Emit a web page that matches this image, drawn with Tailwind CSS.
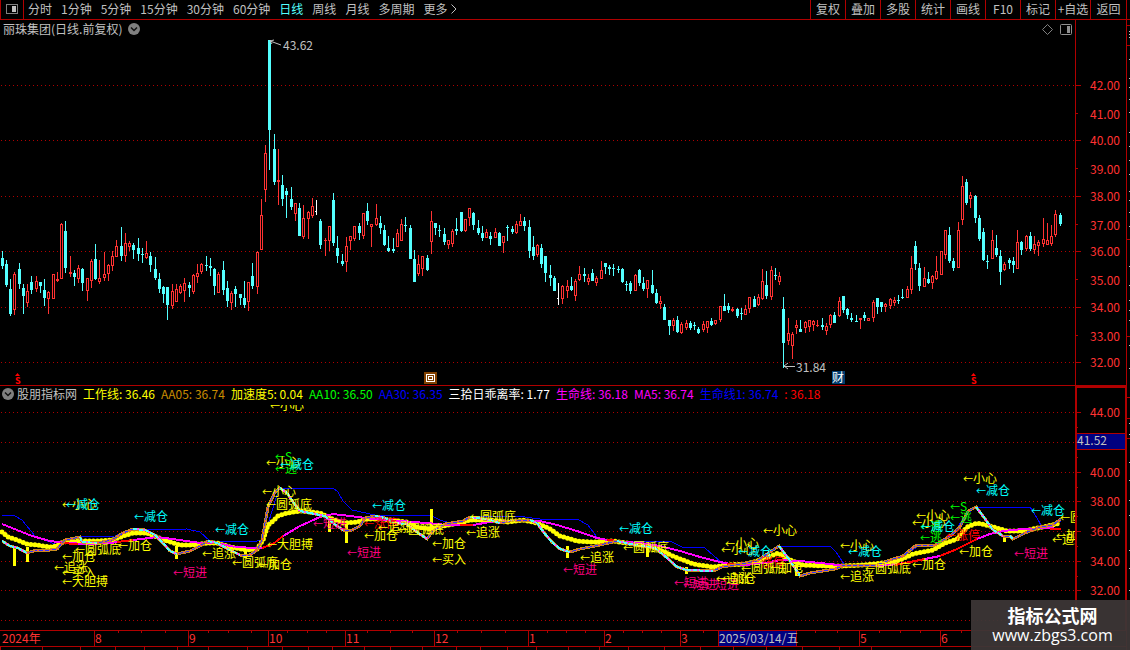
<!DOCTYPE html>
<html lang="zh-CN">
<head>
    <meta charset="UTF-8">
    <meta name="viewport" content="width=device-width, initial-scale=1.0">
    <title>丽珠集团 - 日线</title>
    <script src="https://cdn.jsdelivr.net/npm/@tailwindcss/browser@4"></script>
</head>
<body class="relative flex flex-col min-h-screen bg-black overflow-hidden text-[#c0c0c0] text-xs font-['Noto_Sans_CJK_SC',sans-serif]">

    <!-- Toolbar -->
    <header class="flex justify-between h-5 border-b border-[#b00000] pr-[3px]">
        <nav class="flex items-center gap-[9px] whitespace-nowrap leading-4 pb-[2px]">
            <button type="button" aria-label="面板" class="flex items-center justify-center w-6 h-5 -mr-[5px] border-x border-[#b00000]">
                <svg width="12" height="10" viewBox="0 0 12 10" shape-rendering="crispEdges">
                    <rect x="0.5" y="0.5" width="11" height="9" fill="none" stroke="#808080"/>
                    <rect x="6" y="2" width="4" height="6" fill="#c0c0c0"/>
                </svg>
            </button>
            <button type="button">分时</button>
            <button type="button">1分钟</button>
            <button type="button">5分钟</button>
            <button type="button">15分钟</button>
            <button type="button">30分钟</button>
            <button type="button">60分钟</button>
            <button type="button" class="text-[#54ffff]">日线</button>
            <button type="button">周线</button>
            <button type="button">月线</button>
            <button type="button">多周期</button>
            <button type="button" class="flex items-center gap-1">更多
                <svg width="6" height="10" viewBox="0 0 6 10" fill="none" stroke="#c0c0c0"><path d="M0.5 0.5 L5 5 L0.5 9.5"/></svg>
            </button>
        </nav>
        <nav class="flex whitespace-nowrap leading-4 border-r border-[#b00000]">
            <button type="button" class="w-[35px] pb-[2px] border-l border-[#b00000]">复权</button>
            <button type="button" class="w-[35px] pb-[2px] border-l border-[#b00000]">叠加</button>
            <button type="button" class="w-[35px] pb-[2px] border-l border-[#b00000]">多股</button>
            <button type="button" class="w-[35px] pb-[2px] border-l border-[#b00000]">统计</button>
            <button type="button" class="w-[35px] pb-[2px] border-l border-[#b00000]">画线</button>
            <button type="button" class="w-[35px] pb-[2px] border-l border-[#b00000]">F10</button>
            <button type="button" class="w-[35px] pb-[2px] border-l border-[#b00000]">标记</button>
            <button type="button" class="w-[35px] pb-[2px] border-l border-[#b00000]">+自选</button>
            <button type="button" class="w-[36px] pb-[2px] border-l border-[#b00000]">返回</button>
        </nav>
    </header>

    <div class="flex flex-1">
        <main class="flex-1 min-w-0">
            <!-- K line -->
            <section class="relative border-b border-[#b00000]">
                <svg id="kline" class="block w-full h-auto" viewBox="0 20 1126 365"></svg>
                <div class="absolute inset-x-0 top-0 flex items-center justify-between h-[18px] pl-[3px] pr-[54px]">
                    <h1 class="flex items-center gap-[6px]">丽珠集团(日线.前复权)
                        <svg width="12" height="12" viewBox="0 0 12 12"><circle cx="6" cy="6" r="6" fill="#808080"/><path d="M3 4.5 L6 7.5 L9 4.5" fill="none" stroke="#111" stroke-width="1.5"/></svg>
                    </h1>
                    <div class="flex items-center gap-[7px]">
                        <svg width="11" height="11" viewBox="0 0 11 11" fill="none" stroke="#808080"><path d="M5.5 0.5 L10.5 5.5 L5.5 10.5 L0.5 5.5 Z"/></svg>
                        <svg width="12" height="11" viewBox="0 0 12 11"><rect x="0.5" y="0.5" width="11" height="10" rx="1" fill="none" stroke="#909090"/><rect x="7" y="2" width="3" height="7" fill="#909090"/></svg>
                    </div>
                </div>
            </section>

            <!-- Indicator -->
            <section class="relative">
                <svg id="indicator" class="block w-full h-auto" viewBox="0 386 1126 244"></svg>
                <div class="absolute left-[2px] top-0 flex items-center gap-[6px] h-4 whitespace-nowrap">
                    <h2 class="flex items-center gap-[3px]">
                        <svg width="12" height="12" viewBox="0 0 12 12"><circle cx="6" cy="6" r="6" fill="#808080"/><path d="M3 4.5 L6 7.5 L9 4.5" fill="none" stroke="#111" stroke-width="1.5"/></svg>
                        股朋指标网
                    </h2>
                    <span class="text-[#ffff00]">工作线: 36.46</span>
                    <span class="text-[#c88c00]">AA05: 36.74</span>
                    <span class="text-[#ffff00]">加速度5: 0.04</span>
                    <span class="text-[#00ff00]">AA10: 36.50</span>
                    <span class="text-[#0000ff]">AA30: 36.35</span>
                    <span class="text-white">三拾日乖离率: 1.77</span>
                    <span class="text-[#ff00ff]">生命线: 36.18</span>
                    <span class="text-[#ff00ff]">MA5: 36.74</span>
                    <span class="text-[#0000ff]">生命线1: 36.74</span>
                    <span class="text-[#ff0000]">: 36.18</span>
                </div>
            </section>

            <!-- Dates -->
            <svg id="dates" class="block w-full h-auto" viewBox="0 630 1126 20"></svg>
        </main>

        <!-- Edge of the side panel -->
        <aside class="w-1 border-l border-[#b00000]">
            <svg id="edge" class="block" width="3" height="630" viewBox="0 0 3 630" shape-rendering="crispEdges"></svg>
        </aside>
    </div>

    <!-- Watermark -->
    <footer class="absolute right-0 bottom-0 flex flex-col items-center w-[159px] h-[50px] pt-[3px] pl-1 bg-[#3c3636]/95 text-white">
        <strong class="text-lg leading-6">指标公式网</strong>
        <a href="#" class="text-base leading-4 font-['Open_Sans',sans-serif]">www.zbgs3.com</a>
    </footer>

    <script>
        const LINE = '#b00000', RED = '#ff3232', CYAN = '#54ffff', GRAY = '#c0c0c0';

        const rect = (x, y, w, h, fill) => `<rect x="${x}" y="${y}" width="${w}" height="${h}" fill="${fill}"/>`;
        const text = (x, cy, s, fill) => `<text x="${x}" y="${cy + 4}" fill="${fill}" font-size="12">${s}</text>`;
        const grid = (y) => `<path d="M1 ${y + 0.5} H1075" stroke="${LINE}" stroke-dasharray="1 3"/>`;
        const crisp = (s) => `<g shape-rendering="crispEdges">${s}</g>`;

        // x, high, body top, body bottom, low, colour
        const candles = `2,251,258,266,269,c 6,260,264,285,287,c 10,279,289,314,316,c 14,272,274,310,315,r 19,263,269,284,289,c
            23,284,288,296,314,c 27,284,291,303,307,r 31,276,282,290,294,c 36,276,281,289,292,r 40,282,282,286,293,c
            44,279,290,298,306,c 48,291,292,299,314,r 53,274,274,299,299,r 57,272,279,281,282,r 61,223,224,279,279,r
            65,221,231,268,273,c 70,256,272,274,277,r 74,270,273,277,286,c 78,265,268,279,283,r 82,268,269,283,291,c
            87,278,278,291,301,r 91,259,261,281,288,r 95,244,259,279,280,c 99,260,278,282,284,r 104,252,274,278,281,r
            108,264,265,274,281,r 112,251,256,266,271,r 116,240,246,257,257,r 121,227,246,256,261,c 125,233,243,256,262,r
            129,241,243,247,251,r 133,243,245,250,259,c 138,238,248,254,261,c 142,248,254,255,263,c 146,241,253,258,259,r
            150,252,256,265,272,c 155,257,269,278,280,c 159,273,279,289,293,c 163,286,287,294,303,c 167,287,287,305,320,c
            172,284,291,306,309,r 176,284,289,302,302,r 180,284,286,293,294,r 184,278,283,291,302,r 189,282,285,288,297,c
            193,274,275,292,294,r 197,264,273,277,283,r 201,263,264,272,274,r 206,256,265,266,271,c 210,258,266,268,276,c
            214,268,269,286,295,c 218,272,274,293,293,r 223,261,270,290,295,c 227,281,288,301,307,c 231,291,293,303,310,r
            235,286,289,294,307,c 240,294,294,298,305,c 244,281,298,305,308,c 248,282,282,302,311,r 252,263,276,286,289,c
            257,251,252,287,294,r 261,199,215,250,250,r 265,145,153,190,202,r 269,40,40,130,170,c 274,134,149,182,185,c
            278,149,180,182,205,r 282,175,185,199,206,c 286,188,191,195,218,c 291,187,199,207,210,c 295,203,203,214,221,r
            299,203,208,236,236,c 303,205,218,237,239,r 308,211,212,219,239,r 312,198,206,216,218,r 316,200,211,212,215,w
            320,219,221,245,249,c 325,238,240,241,256,r 329,226,226,241,251,r 333,193,200,243,246,c 337,236,248,256,263,c
            342,254,261,264,266,c 346,237,246,262,272,r 350,236,236,241,250,r 354,226,226,239,241,r 359,223,226,233,240,c
            363,213,213,236,239,r 367,203,211,221,225,c 371,224,224,227,247,r 376,204,218,225,226,r 380,216,223,228,234,c
            384,225,230,245,246,c 388,236,248,251,252,c 393,238,249,251,253,c 397,229,233,247,247,r 401,219,224,241,241,r
            405,217,225,226,232,c 410,225,228,259,259,c 414,250,259,282,282,c 418,255,264,274,276,r 422,256,256,269,276,r
            427,255,258,270,271,c 431,211,221,242,254,r 435,223,223,228,235,c 439,225,230,231,237,c 444,228,234,242,245,c
            448,240,240,245,249,r 452,229,231,244,247,r 456,218,229,231,235,c 461,212,212,231,232,c 465,219,219,231,232,r
            469,208,208,218,226,r 473,212,213,225,230,c 478,220,228,233,235,c 482,226,233,238,241,c 486,229,232,238,238,r
            490,232,236,239,245,c 495,228,232,238,238,r 499,232,233,246,246,c 503,236,236,243,253,r 507,225,227,228,241,c
            512,226,229,232,234,c 516,221,224,233,234,r 520,214,221,226,226,r 524,217,221,226,231,c 529,220,227,251,258,c
            533,236,247,256,260,c 537,244,245,255,257,r 541,244,248,264,268,c 545,256,256,273,282,c 550,265,275,278,286,c
            554,276,278,291,291,c 558,283,298,299,305,w 562,285,286,299,304,r 567,280,286,291,298,r 571,277,286,290,291,c
            575,279,281,296,301,r 579,266,274,280,281,r 584,268,274,276,282,c 588,274,278,282,285,r 592,269,273,281,281,c
            596,276,278,283,286,r 601,261,270,279,279,r 605,263,263,267,274,c 609,265,267,269,275,c 613,264,268,269,276,c
            618,266,269,270,273,c 622,268,269,282,283,c 626,281,284,285,291,c 630,281,283,291,294,c 635,274,275,291,291,r
            639,269,270,283,286,c 643,277,283,289,291,c 647,280,280,289,298,r 652,270,285,293,294,c 656,289,293,303,304,c
            660,296,301,304,309,r 664,304,307,320,320,c 669,320,320,326,335,c 673,318,320,326,331,r 677,316,320,332,333,c
            681,322,324,333,334,r 686,320,323,328,330,r 690,321,323,328,330,c 694,322,325,326,330,c 698,327,329,333,334,c
            703,321,324,330,332,r 707,321,321,328,333,r 711,318,321,325,326,c 715,320,320,324,325,r 720,306,306,320,322,r
            724,294,306,311,311,c 728,303,306,310,313,c 732,307,309,311,312,r 737,308,309,316,318,c 741,308,313,314,320,c
            745,305,309,315,315,r 749,297,297,309,313,r 754,296,299,307,307,c 758,294,297,305,306,r 762,269,281,299,300,r
            766,271,285,296,299,c 771,266,270,297,300,r 775,268,275,276,280,c 779,272,276,282,285,r 783,297,309,343,368,c
            788,318,333,341,345,r 792,332,334,346,359,r 796,320,325,328,334,r 800,320,329,332,332,c 805,321,322,328,333,r
            809,320,320,327,332,r 813,320,321,325,331,r 817,320,325,326,327,r 822,318,325,327,330,c 826,323,326,331,335,r
            830,314,315,325,328,r 834,312,315,323,323,c 839,297,301,316,317,r 843,296,296,310,313,c 847,308,309,315,319,c
            851,313,318,320,322,c 856,315,321,322,322,c 860,318,318,320,329,r 864,312,315,318,321,c 868,318,318,321,321,r
            873,300,302,318,322,r 877,298,298,307,314,c 881,302,302,307,312,c 885,303,304,307,312,r 890,298,299,306,309,r
            894,297,300,303,306,r 898,295,300,301,304,c 902,289,297,298,299,c 907,286,289,298,298,r 911,256,268,290,294,r
            915,241,246,264,270,c 919,263,268,286,291,c 924,267,278,287,287,r 928,272,279,283,284,c 932,275,276,283,289,r
            936,256,271,279,280,r 941,251,251,275,275,r 945,230,230,255,259,r 949,227,235,261,263,c 953,258,261,268,271,c
            958,222,230,268,268,r 962,176,186,220,225,r 966,179,182,203,205,c 970,192,195,199,208,r 975,195,196,218,223,c
            979,215,218,239,241,c 983,228,232,260,261,c 987,255,261,262,269,c 992,230,240,259,259,r 996,235,248,255,257,c
            1000,250,256,272,285,c 1004,262,264,270,271,r 1009,258,260,263,269,c 1013,257,261,265,273,c 1017,230,242,269,269,r
            1021,241,242,250,255,c 1026,235,236,249,251,r 1030,232,236,249,251,c 1034,236,244,250,254,r 1038,240,242,246,256,r
            1043,218,239,244,247,r 1047,223,240,245,245,r 1051,225,236,244,246,r 1055,210,214,235,237,r 1060,213,215,224,226,c`
            .trim().split(/\s+/).map(s => s.split(','));

        // --- K line chart ---
        let k = '';
        [85, 140, 196, 251, 307, 362].forEach(y => { k += grid(y) + rect(1076, y, 5, 1, LINE); });
        [114, 169, 225, 280, 336].forEach(y => { k += rect(1076, y - 1, 2, 1, LINE); });
        k += rect(1075, 20, 1, 365, LINE);
        candles.forEach(([x, hi, top, bot, lo, c]) => {
            [x, hi, top, bot, lo] = [x, hi, top, bot, lo].map(Number);
            const color = { c: CYAN, r: RED, w: '#ffffff' }[c];
            k += rect(x, hi, 1, lo - hi, color);
            if (c === 'w') k += rect(x - 1, top, 1, 1, color);
            else k += rect(x - 1, top, 3, Math.max(1, bot - top), color);
            // rising days are hollow
            if (c === 'r' && bot - top > 2) k += rect(x, top + 1, 1, bot - top - 2, '#000');
        });
        k += rect(424, 372, 13, 12, '#804000') + rect(832, 371, 13, 13, '#003c70');
        k = crisp(k);
        k += `<path d="M274 40 L270 41 L272 44 M270 41 L281 45 M788 363 L784 366 L788 369 M784 366.5 H795" fill="none" stroke="${GRAY}"/>`;
        k += text(283, 46, '43.62', GRAY) + text(796, 368, '31.84', GRAY);
        k += crisp('<rect x="426.5" y="374.5" width="8" height="7" fill="none" stroke="#fff"/><rect x="428.5" y="376.5" width="4" height="3" fill="none" stroke="#fff"/>');
        k += text(832, 378, '财', '#ffffff');
        [17, 973].forEach(x => {
            k += `<path d="M${x - 2} 376 L${x + 0.5} 373 L${x + 3} 376 Z" fill="#ff0000"/>`;
            k += `<text x="${x - 2}" y="384" font-size="9" font-weight="700" fill="#ff0000">S</text>`;
        });
        [[42, 86], [41, 115], [40, 141], [39, 170], [38, 197], [37, 226], [36, 252], [35, 281], [34, 308], [33, 337], [32, 363]]
            .forEach(([v, y]) => { k += text(1090, y, v + '.00', RED); });
        document.getElementById('kline').innerHTML = k;

        // --- Indicator lines ---
        const blue = '2,515 15,516 22,520 35,536 57,545 65,541 75,537 115,536 130,530 187,529 200,532 210,541 257,541 263,540 273,508 279,488 333,488 338,492 343,501 352,510 375,515 432,516 440,520 450,523 463,521 470,516 517,516 540,519 577,519 588,525 597,537 610,541 670,541 682,547 705,548 722,563 750,563 757,562 775,548 778,546 830,546 836,552 844,564 860,564 890,561 905,555 920,545 935,545 955,532 965,515 976,507 1030,507 1037,518 1042,527 1052,526 1061,521';
        const dots = '2,532 8,537 17,540 27,544 37,545 50,547 57,546 63,542 80,541 97,541 113,540 123,536 133,533 147,533 157,537 167,541 180,545 193,545 207,543 217,543 230,547 247,550 257,549 263,540 268,525 273,521 278,516 287,513 300,511 320,513 330,518 343,523 357,522 367,519 383,519 407,522 417,527 430,529 443,526 460,523 470,520 490,520 507,522 523,520 537,523 550,529 560,536 577,541 593,542 613,541 633,544 653,547 673,556 693,564 713,567 727,565 747,564 763,559 778,553 790,560 803,565 827,566 840,566 863,565 883,563 900,560 913,554 933,550 945,543 957,539 967,527 977,523 990,526 1007,531 1023,531 1043,527 1061,523';
        const life = '2,524 17,530 32,536 50,541 67,543 87,544 110,543 133,540 157,537 180,540 200,543 217,543 235,547 257,548 262,548 273,544 283,536 300,526 320,517 333,514 350,516 373,519 400,521 427,523 447,525 473,525 490,522 520,520 540,521 557,525 577,531 597,538 613,541 640,543 660,546 680,551 700,557 720,562 730,564 745,565 765,563 780,560 800,561 820,563 847,566 880,566 905,563 925,559 940,556 957,549 967,544 977,539 990,534 1003,531 1023,529 1047,528 1061,529';
        const lifeRed = ['60,543 78,544', '117,542 133,540', '262,548 273,544 283,536', '460,525 473,525', '607,540 620,541', '727,564 745,564', '895,565 905,563 925,559', '940,556 957,549 967,544 977,539', '1050,529 1061,529'];
        const work = '2,541 10,546 18,548 27,553 37,550 50,550 57,549 65,540 80,537 82,542 97,543 112,540 123,533 133,529 145,530 155,535 163,543 170,551 177,554 190,551 200,546 208,541 217,543 228,549 240,555 250,555 257,550 262,540 268,507 275,492 280,488 287,493 293,502 300,511 310,513 325,516 333,523 343,530 352,530 360,526 365,518 375,516 385,518 395,523 407,524 417,532 427,539 433,531 445,524 457,522 463,521 470,517 490,520 500,523 515,520 530,520 537,523 545,534 552,542 560,549 570,552 580,549 600,545 617,541 635,545 655,548 665,556 677,567 687,570 713,571 722,567 740,564 757,561 770,552 779,546 788,558 795,568 800,576 810,573 835,569 845,565 877,565 890,560 903,556 915,546 935,545 950,536 960,527 968,511 976,507 983,516 993,530 1003,536 1010,536 1013,539 1025,533 1040,527 1053,525 1061,519';
        const bars = [[14, 546, 20], [27, 547, 15], [176, 546, 13], [245, 548, 10], [329, 518, 14], [346, 522, 21], [431, 509, 22], [567, 546, 12], [647, 545, 12], [686, 567, 7], [796, 565, 11], [1004, 536, 6]];
        const poly = (pts, color, w, extra = '') => `<polyline points="${pts}" fill="none" stroke="${color}" stroke-width="${w}" ${extra}/>`;

        let g = '';
        [412, 442, 472, 501, 531, 561, 590, 620].forEach(y => { g += grid(y); });
        g += poly(blue, '#0000ff', 1);
        g += poly(dots, '#ffff00', 5, 'stroke-linecap="round" stroke-dasharray="0 4" shape-rendering="geometricPrecision"');
        bars.forEach(([x, y, h]) => { g += rect(x - 1, y, 3, h, '#ffff00'); });
        g += poly(life, '#ff00ff', 2);
        lifeRed.forEach(p => { g += poly(p, '#ff0000', 2); });
        g += poly(work, '#c88c1e', 3);
        const pts = work.split(' ').map(p => p.split(',').map(Number));
        pts.slice(1).forEach((p, i) => {
            const q = pts[i];
            const seg = q + ' ' + p;
            if (p[1] > q[1]) g += poly(seg, '#ff50ff', 2) + poly(seg, CYAN, 2, 'stroke-dasharray="4 2"');
            else g += poly(seg, '#3232ff', 1) + poly(seg, '#ff5050', 1, 'stroke-dasharray="2 4"');
        });
        g = crisp(g);

        // --- Signals: x of the arrow, middle y, text ---
        const Y = '#ffff00', C = '#00ffff', G = '#00ff00', P = '#ff0080', R = '#ff0000';
        const signals = [
            [62, 505, '小心', Y], [66, 505, '减仓', C], [134, 517, '减仓', C], [215, 530, '减仓', C],
            [62, 557, '加仓', Y], [75, 550, '圆弧底', Y], [118, 546, '加仓', Y], [54, 568, '追涨', Y],
            [62, 573, '买入', Y], [62, 582, '大胆搏', Y], [202, 554, '追涨', Y], [232, 563, '圆弧底', Y],
            [258, 565, '加仓', Y], [173, 573, '短进', P],
            [270, 406, '小心', Y], [275, 457, 'S', G], [266, 463, '小心', Y], [275, 469, '逃', G],
            [280, 465, '减仓', C], [262, 492, '小心', Y], [266, 505, '圆弧底', Y], [372, 506, '减仓', C],
            [267, 545, '大胆搏', Y], [313, 524, '短进', P], [364, 524, '涨停', R], [364, 536, '加仓', Y],
            [378, 528, '追涨', Y], [398, 530, '圆弧底', Y], [347, 553, '短进', P], [432, 544, '加仓', Y],
            [432, 560, '买入', Y], [470, 517, '圆弧底', Y], [466, 533, '追涨', Y],
            [619, 529, '减仓', C], [580, 558, '追涨', Y], [563, 570, '短进', P], [623, 548, '圆弧底', Y],
            [763, 531, '小心', Y], [725, 544, '小心', Y], [721, 550, '小心', Y], [738, 552, '减仓', C],
            [674, 583, '短进', P], [683, 585, '短进', P], [705, 585, '短进', P], [716, 579, '追涨', Y],
            [722, 579, '加仓', Y], [751, 563, '涨停', R], [741, 569, '圆弧底', Y], [770, 568, '加仓', Y],
            [840, 546, '小心', Y], [848, 552, '减仓', C], [840, 577, '追涨', Y], [865, 569, '圆弧底', Y],
            [912, 565, '加仓', Y], [916, 516, '小心', Y], [912, 523, '小心', Y], [920, 527, '逃', G],
            [921, 527, '减仓', C], [920, 538, '逃', G], [950, 507, 'S', G], [950, 518, '逃', G],
            [963, 479, '小心', Y], [976, 491, '减仓', C], [946, 536, '涨停', R], [959, 552, '加仓', Y],
            [1014, 554, '短进', P], [1031, 511, '减仓', C], [1060, 518, '圆弧底', Y], [1052, 540, '追涨', Y],
            [1056, 536, '加仓', Y],
        ];
        let s = '';
        signals.forEach(([x, cy, label, color]) => {
            s += `<text x="${x}" y="${cy + 4}" font-size="12" fill="${color}"><tspan font-size="10">←</tspan>${label}</text>`;
        });
        g += `<clipPath id="plot"><rect x="0" y="405" width="1075" height="225"/></clipPath><g clip-path="url(#plot)">${s}</g>`;

        // value axis
        let axis = rect(1075, 386, 2, 244, LINE) + rect(1075, 386, 51, 2, LINE) + rect(1125, 386, 1, 244, LINE);
        [412, 472, 501, 531, 561, 590].forEach(y => { axis += rect(1077, y, 4, 1, LINE); });
        [427, 457, 487, 516, 546, 576].forEach(y => { axis += rect(1077, y, 1, 1, LINE); });
        axis += rect(1077, 433, 48, 17, LINE) + rect(1077, 434, 48, 15, '#000080');
        g += crisp(axis);
        [[44, 413], [40, 473], [38, 502], [36, 532], [34, 562], [32, 591]].forEach(([v, y]) => { g += text(1090, y, v + '.00', RED); });
        g += text(1077, 441, '41.52', GRAY);
        document.getElementById('indicator').innerHTML = g;

        // --- Date axis ---
        let d = rect(0, 630, 1126, 1, LINE) + rect(0, 646, 1126, 1, LINE);
        [94, 188, 268, 345, 434, 528, 604, 680, 859, 940].forEach(x => { d += rect(x, 631, 1, 15, LINE); });
        [118, 141, 165, 208, 228, 251, 287, 307, 326, 367, 390, 412, 457, 481, 505, 547, 566, 585, 623, 642, 661, 703, 815, 837, 879, 900, 920, 961]
            .forEach(x => { d += rect(x, 631, 1, 2, LINE); });
        [0, 42, 80, 115, 144, 177, 208, 247, 282, 308, 332, 364, 390, 422, 456, 480, 507, 536, 568, 599, 628, 664, 700, 733, 766, 802, 839, 871]
            .forEach(x => { d += rect(x, 647, 1, 3, LINE); });
        d += rect(718, 631, 79, 15, LINE) + rect(719, 631, 77, 15, '#000080');
        d = crisp(d);
        [[2, '2024年'], [95, '8'], [189, '9'], [269, '10'], [346, '11'], [435, '12'], [529, '1'], [605, '2'], [681, '3'], [860, '5'], [941, '6']]
            .forEach(([x, label]) => { d += text(x, 639, label, RED); });
        d += text(719, 639, '2025/03/14/五', GRAY);
        document.getElementById('dates').innerHTML = d;

        // --- Side panel edge ---
        let e = '';
        [5, 25, 219, 316, 377, 398, 418].forEach(y => { e += rect(0, y, 3, 1, LINE); });
        [11, 14, 17, 39, 58, 67, 79, 92, 112, 126, 140, 154, 171, 180, 192, 206, 246, 265, 280, 290, 300, 325, 348, 403, 414, 442, 460, 480, 495, 530, 548, 570]
            .forEach(y => { e += rect(2, y, 1, 1, GRAY); });
        document.getElementById('edge').innerHTML = e;
    </script>
</body>
</html>
